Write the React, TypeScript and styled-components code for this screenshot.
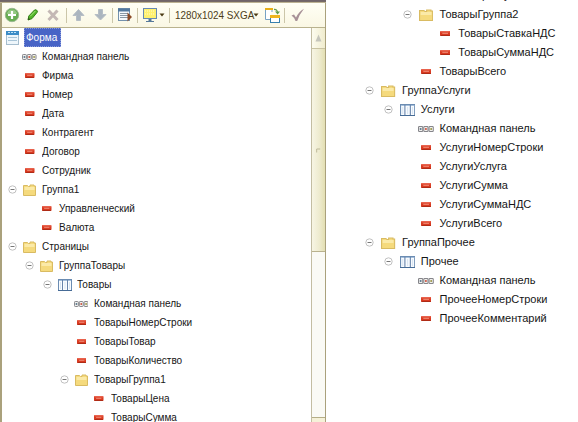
import React from "react";
import styled, { createGlobalStyle } from "styled-components";

const GlobalStyle = createGlobalStyle`
  html, body { margin: 0; padding: 0; overflow: hidden; background: #fff; }
  * { box-sizing: border-box; }
`;

const Page = styled.div`
  display: flex;
  width: 578px;
  height: 422px;
  overflow: hidden;
  background: #fff;
  font: 11px/19px "Liberation Sans", Arial, sans-serif;
  color: #161616;
`;

const Panel = styled.section`
  display: flex;
  flex-direction: column;
  width: 326px;
  height: 422px;
  border: solid #aaa17c;
  border-width: 0 1px 0 2px;
`;

const Frame = styled.div`
  flex: none;
  height: 3px;
  margin: 0 -1px 0 -2px;
  background: linear-gradient(#706469 0 1px, #756a68 1px 2px, #bdb393 2px 3px);
`;

const Toolbar = styled.header`
  flex: none;
  display: flex;
  align-items: center;
  height: 25px;
  background: linear-gradient(#fffff5, #faf7e4);
  border-bottom: 1px solid #b9b28e;
`;

const ToolButton = styled.button<{ $w: number }>`
  flex: none;
  display: flex;
  align-items: center;
  width: ${(p) => p.$w}px;
  height: 22px;
  padding: 0;
  border: 0;
  background: none;
`;

const Divider = styled.span<{ $gap: number }>`
  flex: none;
  width: 1px;
  height: 15px;
  margin-right: ${(p) => p.$gap}px;
  background: #cbc6a9;
`;

const Resolution = styled.span`
  flex: none;
  width: 78px;
  height: 19px;
  color: #4c3c18;
  white-space: nowrap;
`;

const Body = styled.div`
  flex: 1;
  min-height: 0;
  display: flex;
`;

const LeftTree = styled.div`
  flex: 1;
  min-width: 0;
  overflow: hidden;
`;

const RightTree = styled.div`
  width: 252px;
  margin-top: -14px;
  padding-left: 1px;
`;

const Row = styled.div<{ $indent: number }>`
  display: flex;
  align-items: center;
  height: 19px;
  padding-left: ${(p) => p.$indent}px;
  white-space: nowrap;
`;

const Slot = styled.span<{ $w: number }>`
  flex: none;
  display: flex;
  align-items: center;
  width: ${(p) => p.$w}px;
  height: 19px;
`;

const Label = styled.span<{ $scale: number }>`
  display: block;
  height: 19px;
  transform: scaleX(${(p) => p.$scale});
  transform-origin: 0 50%;
`;

const Selected = styled.span`
  display: flex;
  width: 37px;
  height: 19px;
  padding-left: 2px;
  margin-left: -1px;
  color: #fff;
  background: #4864c6;
  outline: 1px dotted #8c9cdc;
  outline-offset: -1px;
`;

const Scrollbar = styled.div`
  flex: none;
  display: flex;
  flex-direction: column;
  width: 14px;
  border-left: 1px solid #c3bda2;
  background: #fafaf5;
`;

const ScrollButton = styled.div`
  flex: none;
  display: flex;
  justify-content: center;
  align-items: center;
  height: 21px;
  background: linear-gradient(90deg, #fdfcef, #f0ecce);
  border-bottom: 1px solid #c9c3a2;
`;

const Thumb = styled.div`
  flex: none;
  display: flex;
  align-items: center;
  justify-content: center;
  height: 203px;
  background: linear-gradient(90deg, #f7f5e4, #eeebcf 55%, #e3dfb3);
  border-bottom: 1px solid #b9b28e;
`;

const Track = styled.div`
  flex: 1;
`;

const ScrollEnd = styled.div`
  height: 5px;
  background: #f5f1d8;
  border-top: 1px solid #b5ae87;
`;

const AddIcon = () => (
  <svg width="16" height="16" viewBox="0 0 16 16">
    <circle cx="8" cy="8" r="6.7" fill="#68ad53" stroke="#9bb991" />
    <path d="M3 7a5 4.5 0 0 1 10 0z" fill="#a6d397" opacity=".7" />
    <path d="M8 4v8M4 8h8" stroke="#fff" strokeWidth="2.2" />
  </svg>
);
const PencilIcon = () => (
  <svg width="14" height="14" viewBox="0 0 14 14">
    <path d="M2 12l.8-4L8.5 2q1-.8 2.2.2 1.3 1 .5 2.1L6 10.6z" fill="#52b528" stroke="#328017" />
    <path d="M4.2 8.3L9.4 3" stroke="#a5e67d" />
    <path d="M2 12l.5-2.2L4 11.3z" fill="#324318" />
  </svg>
);
const CrossIcon = () => (
  <svg width="14" height="14" viewBox="0 0 14 14">
    <path d="M2.5 2.5l9 9.500M11.500 2.500l-9 9.500" stroke="#c4b8b5" strokeWidth="3" />
  </svg>
);
const ArrowIcon = ({ down = false }: { down?: boolean }) => (
  <svg width="14" height="14" viewBox="0 0 14 14">
    <path
      d={down ? "M4.500 1.500h4v5H12L6.500 12 1 6.500h3.500z" : "M4.500 12.500v-5H1l5.500-6L12 7.500H8.500v5z"}
      fill="#abb5bf"
      stroke="#b6bec5"
    />
  </svg>
);
const PropertiesIcon = () => (
  <svg width="16" height="16" viewBox="0 0 16 16">
    <rect x="1.500" y="1.500" width="11" height="12" fill="#f5f9fc" stroke="#7491ad" />
    <path d="M1 3h12" stroke="#52799f" strokeWidth="3" />
    <path d="M3 6.500h8M3 8.500h8M3 10.500h8" stroke="#8998a5" />
    <path d="M10.500 5.500v9L15 10z" fill="#8b4a27" />
  </svg>
);
const MonitorIcon = () => (
  <svg width="15" height="16" viewBox="0 0 15 16">
    <rect x=".5" y="1.500" width="13" height="10" fill="#fff16f" stroke="#668ab3" />
    <path d="M2 4h10M2 7h10" stroke="#fffbd0" strokeDasharray="1 1" />
    <path d="M7 12v2" stroke="#56789b" strokeWidth="3" />
    <path d="M3 14.500h8" stroke="#56789b" />
  </svg>
);
const Caret = () => (
  <svg width="6" height="4" viewBox="0 0 6 4">
    <path d="M.5 .5h5L3 3.500z" fill="#4b3a13" />
  </svg>
);
const WindowsIcon = () => (
  <svg width="16" height="17" viewBox="0 0 16 17">
    <path d="M7 1.500H.500v11H5M7 1.500V5" fill="#fff" stroke="#77a2c4" />
    <path d="M0 2h8" stroke="#e7af18" strokeWidth="2" />
    <rect x="5.500" y="8.500" width="9" height="7" fill="#fff" stroke="#377fae" />
    <path d="M5 9.500h10" stroke="#edb41e" strokeWidth="3" />
    <path d="M9 2.500q3-.5 3.500 3" stroke="#679d4d" fill="none" strokeWidth="1.300" />
    <path d="M10 4.500h5L12.600 7.500z" fill="#5b9b4c" />
  </svg>
);
const CheckIcon = () => (
  <svg width="14" height="14" viewBox="0 0 14 14">
    <path d="M.5 7.500L3 6.500l2 3Q8 3.500 13 .8 8.300 6.500 6.200 13H4.500Q3 9 .5 7.500z" fill="#a79197" />
  </svg>
);

const FormIcon = () => (
  <svg width="13" height="14" viewBox="0 0 13 14">
    <rect x=".5" y=".5" width="12" height="13" fill="#eef6fb" stroke="#a5bdce" />
    <rect width="13" height="4" fill="#3c8cc6" />
    <path d="M2 1.500h9" stroke="#bfe2f6" strokeDasharray="2 1" />
    <path d="M2 6.500h9M2 9.500h9" stroke="#a9c5d8" />
  </svg>
);
const CommandIcon = ({ width }: { width: number }) => (
  <svg width={width} height="6" viewBox="0 0 15 6" preserveAspectRatio="none">
    {[0, 5, 10].map((x, i) => (
      <g key={x}>
        <rect x={x + 0.5} y=".5" width="4" height="5" rx=".8" fill="#f1f0ed" stroke="#85858a" />
        <rect x={x + 1.7} y="2" width="1.600" height="2" fill={["#668195", "#d35f4d", "#a5a158"][i]} />
      </g>
    ))}
  </svg>
);
const FieldIcon = ({ width }: { width: number }) => (
  <svg width={width} height="5" viewBox="0 0 9 5" preserveAspectRatio="none">
    <rect width="9" height="5" rx=".8" fill="#d93a21" />
    <path d="M.5 .8h8" stroke="#ef7560" />
    <path d="M2 2.300h5" stroke="#f5a08b" strokeWidth=".8" />
    <path d="M.5 4.500h8" stroke="#ae2b16" />
  </svg>
);
const FolderIcon = ({ width }: { width: number }) => (
  <svg width={width} height="12" viewBox="0 0 13 12" preserveAspectRatio="none">
    <path d="M.5 11V1.500h4l1 1H7V1h4v1h1.500v9.500H.5z" fill="#f5da7d" stroke="#d9bb62" />
    <path d="M1.500 4.500h10" stroke="#fbeaa8" strokeWidth="3" />
  </svg>
);
const TableIcon = ({ width }: { width: number }) => (
  <svg width={width} height="12" viewBox="0 0 14 12" preserveAspectRatio="none">
    <rect x=".5" y=".5" width="13" height="11" fill="#f8fbfe" stroke="#6b8cb2" />
    <path d="M1 1.500h12" stroke="#a4bedb" />
    <path d="M4.500 1v10M9.500 1v10" stroke="#6683aa" />
    <path d="M0 11.500h14" stroke="#466b96" />
    <path d="M2.500 3v7M7 3v7M11.500 3v7" stroke="#d9e6f3" />
  </svg>
);
const CollapseIcon = () => (
  <svg width="9" height="9" viewBox="0 0 9 9">
    <circle cx="4.500" cy="4.500" r="3.700" fill="#fff" stroke="#b9b9b9" strokeWidth=".9" />
    <path d="M2.500 4.500h4" stroke="#777" />
  </svg>
);

type Kind = "command" | "field" | "folder" | "table";
type Item = { kind: Kind; level: number; text: string };
const item = (level: number, kind: Kind, text: string): Item => ({ level, kind, text });

const leftItems: Item[] = [
  item(0, "command", "Командная панель"),
  item(0, "field", "Фирма"),
  item(0, "field", "Номер"),
  item(0, "field", "Дата"),
  item(0, "field", "Контрагент"),
  item(0, "field", "Договор"),
  item(0, "field", "Сотрудник"),
  item(0, "folder", "Группа1"),
  item(1, "field", "Управленческий"),
  item(1, "field", "Валюта"),
  item(0, "folder", "Страницы"),
  item(1, "folder", "ГруппаТовары"),
  item(2, "table", "Товары"),
  item(3, "command", "Командная панель"),
  item(3, "field", "ТоварыНомерСтроки"),
  item(3, "field", "ТоварыТовар"),
  item(3, "field", "ТоварыКоличество"),
  item(3, "folder", "ТоварыГруппа1"),
  item(4, "field", "ТоварыЦена"),
  item(4, "field", "ТоварыСумма"),
];

const rightItems: Item[] = [
  item(3, "field", "ТоварыСумма"),
  item(2, "folder", "ТоварыГруппа2"),
  item(3, "field", "ТоварыСтавкаНДС"),
  item(3, "field", "ТоварыСуммаНДС"),
  item(2, "field", "ТоварыВсего"),
  item(0, "folder", "ГруппаУслуги"),
  item(1, "table", "Услуги"),
  item(2, "command", "Командная панель"),
  item(2, "field", "УслугиНомерСтроки"),
  item(2, "field", "УслугиУслуга"),
  item(2, "field", "УслугиСумма"),
  item(2, "field", "УслугиСуммаНДС"),
  item(2, "field", "УслугиВсего"),
  item(0, "folder", "ГруппаПрочее"),
  item(1, "table", "Прочее"),
  item(2, "command", "Командная панель"),
  item(2, "field", "ПрочееНомерСтроки"),
  item(2, "field", "ПрочееКомментарий"),
];

type Metrics = { base: number; step: number; unit: number; scale: number };
const leftMetrics: Metrics = { base: 6, step: 17.25, unit: 1, scale: 0.91 };
const rightMetrics: Metrics = { base: 38, step: 18.75, unit: 1.09, scale: 1 };

const icons = {
  command: { Icon: CommandIcon, offset: -1, width: 14.5 },
  field: { Icon: FieldIcon, offset: 2, width: 9.5 },
  folder: { Icon: FolderIcon, offset: 0, width: 13 },
  table: { Icon: TableIcon, offset: 0, width: 14 },
};

const Pad = styled.span<{ $w: number }>`
  display: flex;
  margin-left: ${(p) => p.$w}px;
`;

const TreeRow = ({ data, m }: { data: Item; m: Metrics }) => {
  const { Icon, offset, width } = icons[data.kind];
  const expandable = data.kind === "folder" || data.kind === "table";
  return (
    <Row $indent={m.base + m.step * data.level}>
      <Slot $w={15 * m.unit}>{expandable && <CollapseIcon />}</Slot>
      <Slot $w={19 * m.unit}>
        <Pad $w={offset}>
          <Icon width={width * m.unit} />
        </Pad>
      </Slot>
      <Label $scale={m.scale}>{data.text}</Label>
    </Row>
  );
};

export default function App() {
  return (
    <Page>
      <GlobalStyle />
      <Panel>
        <Frame />
        <Toolbar>
          <Slot $w={2} />
          <ToolButton $w={22}><AddIcon /></ToolButton>
          <ToolButton $w={20}><PencilIcon /></ToolButton>
          <ToolButton $w={20}><CrossIcon /></ToolButton>
          <Divider $gap={5} />
          <ToolButton $w={22}><ArrowIcon /></ToolButton>
          <ToolButton $w={18}><ArrowIcon down /></ToolButton>
          <Divider $gap={4} />
          <ToolButton $w={20}><PropertiesIcon /></ToolButton>
          <Divider $gap={5} />
          <ToolButton $w={16}><MonitorIcon /></ToolButton>
          <ToolButton $w={10}><Caret /></ToolButton>
          <Divider $gap={5} />
          <Resolution><Label $scale={0.9}>1280x1024 SXGA</Label></Resolution>
          <ToolButton $w={12}><Caret /></ToolButton>
          <ToolButton $w={19}><WindowsIcon /></ToolButton>
          <Divider $gap={6} />
          <ToolButton $w={14}><CheckIcon /></ToolButton>
        </Toolbar>
        <Body>
          <LeftTree>
            <Row $indent={4}>
              <Slot $w={19}><FormIcon /></Slot>
              <Selected><Label $scale={0.91}>Форма</Label></Selected>
            </Row>
            {leftItems.map((data, i) => <TreeRow key={i} data={data} m={leftMetrics} />)}
          </LeftTree>
          <Scrollbar>
            <ScrollButton>
              <svg width="7" height="8" viewBox="0 0 7 8"><path d="M.5 7.500l3-7 3 7z" fill="#c5c5bb" /></svg>
            </ScrollButton>
            <Thumb>
              <svg width="5" height="5" viewBox="0 0 5 5"><path d="M.7 4.500V1h3.500" fill="none" stroke="#bdb999" /></svg>
            </Thumb>
            <Track />
            <ScrollEnd />
          </Scrollbar>
        </Body>
      </Panel>
      <RightTree>
        {rightItems.map((data, i) => <TreeRow key={i} data={data} m={rightMetrics} />)}
      </RightTree>
    </Page>
  );
}
